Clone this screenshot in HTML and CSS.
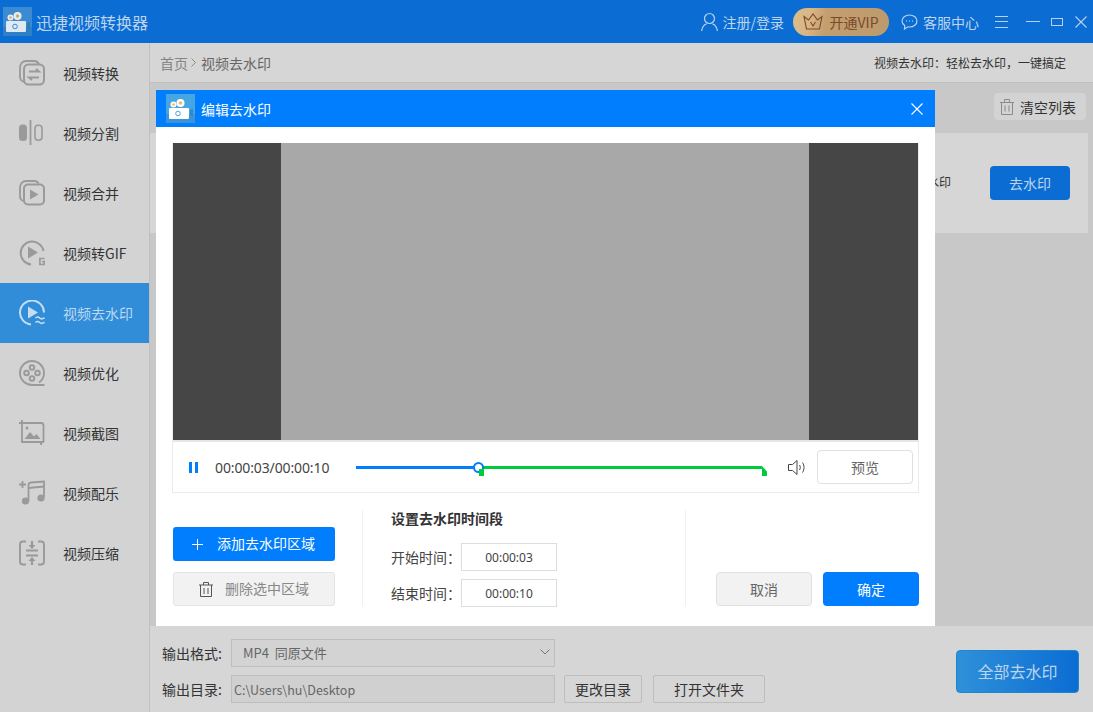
FILE: index.html
```html
<!DOCTYPE html>
<html lang="zh">
<head>
<meta charset="utf-8">
<title>迅捷视频转换器</title>
<link rel="stylesheet" href="styles.css">
</head>
<body>
<div class="app">
  <header class="titlebar">
    <div class="brand">
      <span class="logo-box"><svg width="29" height="29" viewBox="0 0 29 29"><rect width="29" height="29" fill="#3a8bd2"/><rect y="20" width="29" height="9" fill="#2f7fc6"/><circle cx="7.500" cy="10.500" r="3" fill="#e8eef3"/><circle cx="14.500" cy="9" r="4" fill="#e8eef3"/><circle cx="14.500" cy="9" r="1.800" fill="#d7a866"/><circle cx="7.500" cy="10.500" r="1.300" fill="#d7a866"/><rect x="3" y="14" width="20" height="11" rx="1" fill="#dfe9f1"/><path d="M24 16l3-1.500v8L24 21z" fill="#2c7db0"/><circle cx="12" cy="19.500" r="2.300" fill="none" stroke="#3a8bd2"/></svg></span>
      <span class="app-name">迅捷视频转换器</span>
    </div>
    <div class="top-actions">
      <svg class="ic-user" width="17" height="20" viewBox="0 0 17 20" fill="none" stroke="#b9d2ee" stroke-width="1.200"><circle cx="8.500" cy="6.500" r="5"/><path d="M.6 19c.6-4.300 3-6.600 5-7.300M16.400 19c-.6-4.300-3-6.600-5-7.300"/></svg>
      <span class="top-text login">注册/登录</span>
      <span class="vip"><svg width="20" height="17" viewBox="0 0 20 17" fill="none" stroke="#7a4a2c" stroke-width="1.100"><path d="M1 3.500l4.500 3.500L10 1l4.500 6L19 3.500 16.500 16h-13z"/><path d="M7.500 9l2.500 4 2.500-4"/></svg><span>开通VIP</span></span>
      <svg width="17" height="16" viewBox="0 0 17 16" fill="none" stroke="#b9d2ee" stroke-width="1.200"><path d="M8.500 1C4.300 1 1 3.600 1 7c0 1.900 1 3.500 2.700 4.600L3.500 15l3.400-2.200c.5.100 1.100.2 1.600.2 4.200 0 7.500-2.600 7.500-6s-3.300-6-7.500-6z"/><path d="M5 7h.8M8.100 7h.8M11.200 7h.8" stroke-width="1.400"/></svg>
      <span class="top-text service">客服中心</span>
      <span class="win-menu"><i></i><i></i><i></i></span>
      <span class="win-min"></span>
      <span class="win-max"></span>
      <svg class="win-close" width="12" height="12" viewBox="0 0 12 12" stroke="#b9d2ee" stroke-width="1.100"><path d="M.5.500l11 11M11.500.500l-11 11"/></svg>
    </div>
  </header>

  <div class="body">
    <nav class="sidebar">
      <a class="nav-item"><svg class="nav-ic" viewBox="0 0 26 26" fill="none" stroke="#9a9a9a" stroke-width="1.800"><path d="M5 22C2.500 21 1 19.500 1 17V7c0-3.300 2.700-6 6-6h8c2.500 0 4 1 5 3"/><rect x="5" y="4.500" width="20" height="20" rx="4.500" stroke-width="2"/><path d="M10 11.500h10l-3-2.500M20 17.500H10l3 2.500" stroke-width="1.900"/></svg><span>视频转换</span></a>
      <a class="nav-item"><svg class="nav-ic" viewBox="0 0 26 26" fill="none"><rect x="0" y="4.500" width="8" height="16.500" rx="3.500" fill="#9a9a9a"/><path d="M11.500 0v25" stroke="#9a9a9a" stroke-width="1.800"/><rect x="16" y="5.300" width="7" height="15" rx="3.200" stroke="#9a9a9a" stroke-width="1.600"/></svg><span>视频分割</span></a>
      <a class="nav-item"><svg class="nav-ic" viewBox="0 0 26 26" fill="none" stroke="#9a9a9a" stroke-width="1.800"><path d="M4 21C2 20 1 18.500 1 16V7c0-3.300 2.700-6 6-6h8c2.500 0 4 1 4.500 2.500"/><rect x="5" y="4.500" width="20" height="20" rx="4" stroke-width="2"/><path d="M11 9.500l8.500 5-8.500 5z" fill="#9a9a9a" stroke="none"/></svg><span>视频合并</span></a>
      <a class="nav-item"><svg class="nav-ic" viewBox="0 0 26 26" fill="none" stroke="#9a9a9a" stroke-width="2"><path d="M24.500 11A11.500 11.500 0 1 0 12 24.500"/><path d="M9 6.500l10 6-10 6z" fill="#9a9a9a" stroke="none"/><path d="M25.500 18.500h-4.600v6h4.200v-3h-2" stroke-width="1.700"/></svg><span>视频转GIF</span></a>
      <a class="nav-item active"><svg class="nav-ic" viewBox="0 0 26 26" fill="none" stroke="#c6dcf1" stroke-width="2"><path d="M25 12.500A12 12 0 1 0 12 24.500"/><path d="M9 6.500l10 6-10 6z" fill="#c6dcf1" stroke="none"/><path d="M16.500 18c1.500-1.300 3-1.300 4.200 0s2.800 1 4.800-.2M16.500 22.500c1.500-1.300 3-1.300 4.200 0s2.800 1 4.800-.2" stroke-width="1.600"/></svg><span>视频去水印</span></a>
      <a class="nav-item"><svg class="nav-ic" viewBox="0 0 26 26" fill="none" stroke="#9a9a9a" stroke-width="1.900"><path d="M25.500 25H13.500A12 12 0 1 1 25 13c0 4-2 7.500-5 9.500"/><circle cx="13" cy="7.500" r="2.300"/><circle cx="7.500" cy="13" r="2.300"/><circle cx="18.500" cy="13" r="2.300"/><circle cx="13" cy="18.500" r="2.300"/></svg><span>视频优化</span></a>
      <a class="nav-item"><svg class="nav-ic" viewBox="0 0 26 26" fill="none" stroke="#9a9a9a" stroke-width="1.800"><path d="M3 0v22h22M0 3h22c1.500 0 2.500 1 2.500 2.500V22M22 22v3"/><path d="M5.500 19l5.500-7 4 4.500 2.500-2.500 4 5z" fill="#9a9a9a" stroke="none"/><circle cx="8" cy="8" r="1.500" fill="#9a9a9a" stroke="none"/></svg><span>视频截图</span></a>
      <a class="nav-item"><svg class="nav-ic" viewBox="0 0 26 26" fill="none" stroke="#9a9a9a" stroke-width="1.800"><path d="M0 4.500h7M3.500 1v7"/><path d="M9.500 21V5c0-1.500 1-2.500 2.500-2.500l13-1V17"/><path d="M9.500 8l15.500-1.500"/><circle cx="6.500" cy="21" r="3.600" fill="#9a9a9a" stroke="none"/><circle cx="22" cy="18" r="3.600" fill="#9a9a9a" stroke="none"/></svg><span>视频配乐</span></a>
      <a class="nav-item"><svg class="nav-ic" viewBox="0 0 26 26" fill="none" stroke="#9a9a9a" stroke-width="1.900"><path d="M7 1.500H4C2.300 1.500 1 2.800 1 4.500v17c0 1.700 1.300 3 3 3h3M19 1.500h3c1.700 0 3 1.300 3 3v17c0 1.700-1.300 3-3 3h-3"/><path d="M7 10.500h12M7 15.500h12" stroke-width="2.200"/><path d="M13 1v4M13 25v-4" stroke-width="2.200"/><path d="M9.500 5h7L13 9zM9.500 21h7L13 17z" fill="#9a9a9a" stroke="none"/></svg><span>视频压缩</span></a>
    </nav>

    <main class="content">
      <div class="crumbs">
        <div class="crumb-path"><span class="crumb-home">首页</span><svg width="5" height="9" viewBox="0 0 5 9" fill="none" stroke="#8a8a8a"><path d="M.5.500l4 4-4 4"/></svg><span class="crumb-cur">视频去水印</span></div>
        <div class="crumb-hint">视频去水印：轻松去水印，一键搞定</div>
      </div>
      <div class="list-area">
        <div class="list-tools">
          <button class="clear-btn"><svg width="14" height="16" viewBox="0 0 14 16" fill="none" stroke="#8b8b8b"><path d="M0 3.500h14M4.500 3.500V.500h5v3M1.500 3.500v12h11v-12M5 6.500v6M9 6.500v6"/></svg>清空列表</button>
        </div>
        <div class="file-row">
          <span class="file-frag">水印</span>
          <button class="remove-btn">去水印</button>
        </div>
      </div>
      <footer class="output">
        <div class="out-fields">
          <div class="out-row">
            <label class="out-label">输出格式:</label>
            <div class="select">MP4&nbsp;&nbsp;同原文件<svg width="10" height="6" viewBox="0 0 10 6" fill="none" stroke="#777"><path d="M.5.500L5 5 9.500.500"/></svg></div>
          </div>
          <div class="out-row">
            <label class="out-label">输出目录:</label>
            <div class="path">C:\Users\hu\Desktop</div>
            <button class="out-btn change">更改目录</button>
            <button class="out-btn open">打开文件夹</button>
          </div>
        </div>
        <button class="all-btn">全部去水印</button>
      </footer>
    </main>
  </div>

  <section class="modal">
    <div class="modal-head">
      <span class="modal-logo"><svg width="29" height="29" viewBox="0 0 29 29"><rect width="29" height="29" fill="#46a6e2"/><rect y="20" width="29" height="9" fill="#3b94d8"/><circle cx="7.500" cy="10.500" r="3" fill="#fff"/><circle cx="14.500" cy="9" r="4" fill="#fff"/><circle cx="14.500" cy="9" r="1.800" fill="#f5b860"/><circle cx="7.500" cy="10.500" r="1.300" fill="#f5b860"/><rect x="3" y="14" width="20" height="11" rx="1" fill="#fff"/><path d="M24 16l3-1.500v8L24 21z" fill="#2b8ccb"/><circle cx="12" cy="19.500" r="2.300" fill="none" stroke="#46a6e2"/></svg></span>
      <span class="modal-title">编辑去水印</span>
      <svg class="modal-close" width="12" height="12" viewBox="0 0 12 12" stroke="#fff" stroke-width="1.100"><path d="M.5.500l11 11M11.500.500l-11 11"/></svg>
    </div>
    <div class="modal-body">
      <div class="player">
        <div class="video"><div class="frame"></div></div>
        <div class="controls">
          <span class="pause"><i></i><i></i></span>
          <span class="timecode">00:00:03/00:00:10</span>
          <div class="track">
            <div class="track-blue"></div>
            <div class="track-green">
              <span class="knob"></span>
              <span class="mark-start"></span>
              <span class="mark-end"></span>
            </div>
          </div>
          <svg class="speaker" width="18" height="15" viewBox="0 0 18 15" fill="none" stroke="#444"><path d="M.5 4.500h4L9 .500v14l-4.500-4h-4z"/><path d="M11.500 5c1 1.500 1 3.500 0 5M14.500 2.500c2 3 2 7 0 10"/></svg>
          <button class="preview">预览</button>
        </div>
      </div>
      <div class="edit-row">
        <div class="col-area">
          <button class="btn-add"><svg width="11" height="11" viewBox="0 0 11 11" stroke="#fff"><path d="M5.500 0v11M0 5.500h11"/></svg><span>添加去水印区域</span></button>
          <button class="btn-del"><svg width="14" height="15" viewBox="0 0 14 15" fill="none" stroke="#555"><path d="M0 3h14M4.500 3V.500h5V3M1.500 3v11.500h11V3M5 6v6M9 6v6"/></svg><span>删除选中区域</span></button>
        </div>
        <div class="col-time">
          <h3 class="time-title">设置去水印时间段</h3>
          <div class="time-row"><label>开始时间：</label><span class="time-box">00:00:03</span></div>
          <div class="time-row"><label>结束时间：</label><span class="time-box">00:00:10</span></div>
        </div>
        <div class="col-actions">
          <button class="btn-cancel">取消</button>
          <button class="btn-ok">确定</button>
        </div>
      </div>
    </div>
  </section>
</div>
</body>
</html>
```
FILE: styles.css
```css
* { box-sizing: border-box; }
html, body { margin: 0; padding: 0; }
body { font-family: "Noto Sans CJK SC", "Liberation Sans", sans-serif; font-size: 14px; color: #333; overflow: hidden; }
button { font-family: inherit; cursor: default; padding: 0; }
.app { position: relative; width: 1093px; height: 712px; display: flex; flex-direction: column; background: #c8c8c8; overflow: hidden; }

.titlebar { height: 43px; flex: none; background: #0b6dd3; display: flex; align-items: center; justify-content: space-between; }
.brand { display: flex; align-items: center; padding-left: 3px; }
.logo-box { display: block; width: 29px; height: 29px; }
.logo-box svg, .modal-logo svg { display: block; }
.app-name { margin-left: 4px; font-size: 16px; color: #bcd4ee; }
.top-actions { display: flex; align-items: center; color: #bcd4ee; }
.ic-user { margin-right: 5px; }
.top-text { font-size: 14px; }
.vip { width: 96px; height: 28px; margin: 0 12px 0 9px; border-radius: 14px; background: linear-gradient(100deg, #dcbc8c 0, #d9b684 18%, #c39f70 35%, #bd9a6c 100%); display: flex; align-items: center; justify-content: center; gap: 6px; color: #7a4a2c; font-size: 14px; }
.service { margin-left: 5px; }
.win-menu { width: 13px; height: 12px; margin-left: 16px; display: flex; flex-direction: column; justify-content: space-between; }
.win-menu i { display: block; height: 1px; background: #b9d2ee; }
.win-min { width: 14px; height: 1px; background: #b9d2ee; margin-left: 18px; }
.win-max { width: 12px; height: 8px; border: 1px solid #b9d2ee; margin-left: 11px; }
.win-close { margin: 0 6px 0 12px; }

.body { flex: 1; display: flex; min-height: 0; }
.sidebar { width: 150px; flex: none; background: #d3d3d3; border-right: 1px solid #c0c0c0; }
.nav-item { height: 60px; display: flex; align-items: center; padding-left: 19px; font-size: 14px; color: #333; }
.nav-item span { margin-left: 18px; }
.nav-ic { width: 26px; height: 26px; flex: none; }
.nav-item.active { background: #318dd8; color: #bdd8f2; }

.content { flex: 1; display: flex; flex-direction: column; min-width: 0; }
.crumbs { height: 40px; flex: none; background: #d6d6d6; border-bottom: 1px solid #bfbfbf; display: flex; align-items: center; justify-content: space-between; padding: 0 27px 0 10px; }
.crumb-path { display: flex; align-items: center; font-size: 14px; color: #666; }
.crumb-home { color: #858585; }
.crumb-path svg { margin: 0 5px 0 3px; }
.crumb-hint { font-size: 12px; color: #333; }

.list-area { flex: 1; min-height: 0; padding-right: 5px; }
.list-tools { height: 50px; display: flex; align-items: center; justify-content: flex-end; padding: 0 2px 3px 0; }
.clear-btn { width: 92px; height: 27px; border: 0; border-radius: 4px; background: #d3d3d3; color: #333; font-size: 14px; display: flex; align-items: center; padding-left: 6px; gap: 6px; }
.file-row { height: 100px; background: #d6d6d6; display: flex; align-items: center; justify-content: flex-end; padding-right: 18px; }
.file-frag { margin: 0 39px 4px 0; font-size: 12px; color: #333; white-space: nowrap; }
.remove-btn { width: 80px; height: 34px; border: 0; border-radius: 4px; background: #0b6dd3; color: #bcd4ee; font-size: 14px; }

.output { height: 86px; flex: none; background: #d6d6d6; display: flex; align-items: center; justify-content: space-between; padding: 4px 14px 0 12px; }
.out-fields { display: flex; flex-direction: column; gap: 8px; }
.out-row { display: flex; align-items: center; height: 28px; }
.out-label { width: 69px; font-size: 14px; color: #333; white-space: nowrap; }
.select { width: 324px; height: 28px; border: 1px solid #bdbdbd; background: #d3d3d3; display: flex; align-items: center; justify-content: space-between; padding: 0 4px 2px 11px; font-size: 13px; color: #666; }
.path { width: 324px; height: 28px; border: 1px solid #bdbdbd; background: #d0d0d0; display: flex; align-items: center; padding-left: 2px; font-size: 12.500px; color: #666; }
.out-btn { height: 28px; border: 1px solid #bdbdbd; border-radius: 2px; background: #d6d6d6; color: #333; font-size: 14px; }
.change { width: 78px; margin-left: 9px; }
.open { width: 112px; margin-left: 11px; }
.all-btn { width: 123px; height: 43px; border: 1px solid #1d86d0; border-radius: 4px; background: linear-gradient(90deg, #2f90d9, #0b6dd3); color: #bcd4ee; font-size: 16px; }

.modal { position: absolute; left: 156px; top: 90px; width: 779px; height: 536px; background: #fff; display: flex; flex-direction: column; }
.modal-head { height: 37px; flex: none; background: #007efe; display: flex; align-items: center; padding: 0 12px 0 10px; color: #fff; }
.modal-logo { display: block; width: 29px; height: 29px; }
.modal-title { margin-left: 6px; font-size: 14px; flex: 1; }
.modal-body { flex: 1; display: flex; flex-direction: column; padding: 16px 16px 0; }
.player { height: 350px; flex: none; border: 1px solid #ebebeb; border-top: 0; display: flex; flex-direction: column; }
.video { height: 299px; flex: none; background: #464646; display: flex; justify-content: center; border-bottom: 2px solid #e6e6e6; }
.frame { width: 528px; margin-left: -1px; background: #a8a8a8; }
.controls { flex: 1; display: flex; align-items: center; padding: 0 5px 0 16px; }
.pause { width: 9px; height: 11px; display: flex; justify-content: space-between; }
.pause i { display: block; width: 3px; background: #007efe; }
.timecode { margin-left: 17px; font-size: 14px; font-family: "Noto Sans", "Noto Sans CJK SC", sans-serif; color: #444; width: 141px; white-space: nowrap; letter-spacing: -0.12px; }
.track { width: 406px; display: flex; height: 3px; flex: none; margin-top: 1px; }
.track-blue { width: 122px; background: #007efe; }
.track-green { flex: 1; background: #00cb3d; position: relative; }
.knob { position: absolute; left: -5px; top: -4px; width: 11px; height: 11px; border-radius: 50%; background: #fff; border: 2.500px solid #007efe; }
.mark-start { position: absolute; left: 1px; top: 3px; width: 5px; height: 7px; background: #00cb3d; }
.mark-end { position: absolute; right: -5px; top: 0; width: 5px; height: 10px; background: #00cb3d; clip-path: polygon(0 0, 100% 55%, 100% 100%, 0 100%); }
.speaker { margin-left: 26px; flex: none; }
.preview { width: 96px; height: 34px; margin-left: 11px; border: 1px solid #e0e0e0; border-radius: 4px; background: #fff; color: #666; font-size: 14px; }

.edit-row { display: flex; padding-top: 17px; }
.col-area { width: 191px; height: 96px; flex: none; display: flex; flex-direction: column; gap: 11px; padding: 17px 0 0 1px; border-right: 1px solid #efefef; }
.btn-add { width: 162px; height: 34px; flex: none; border: 0; border-radius: 3px; background: #007efe; color: #fff; font-size: 14px; display: flex; align-items: center; padding-left: 19px; gap: 14px; }
.btn-del { width: 162px; height: 34px; flex: none; border: 1px solid #e4e4e4; border-radius: 3px; background: #f2f2f2; color: #888; font-size: 14px; display: flex; align-items: center; padding-left: 25px; gap: 12px; }
.btn-add span, .btn-del span { padding-bottom: 2px; }
.col-time { width: 323px; height: 96px; flex: none; padding-left: 28px; border-right: 1px solid #efefef; }
.time-title { margin: -1px 0 16px; font-size: 14px; font-weight: 700; color: #333; line-height: 18px; }
.time-row { display: flex; align-items: center; height: 28px; margin-bottom: 8px; }
.time-row label { width: 70px; font-size: 14px; color: #444; white-space: nowrap; }
.time-box { width: 96px; height: 28px; border: 1px solid #ddd; display: flex; align-items: center; justify-content: center; font-size: 12px; color: #444; font-family: "Noto Sans", sans-serif; }
.col-actions { flex: 1; display: flex; align-items: flex-end; justify-content: flex-end; gap: 11px; height: 96px; }
.btn-cancel { width: 96px; height: 34px; border: 1px solid #e0e0e0; border-radius: 4px; background: #f2f2f2; color: #666; font-size: 14px; }
.btn-ok { width: 96px; height: 34px; border: 0; border-radius: 4px; background: #007efe; color: #fff; font-size: 14px; }
```
